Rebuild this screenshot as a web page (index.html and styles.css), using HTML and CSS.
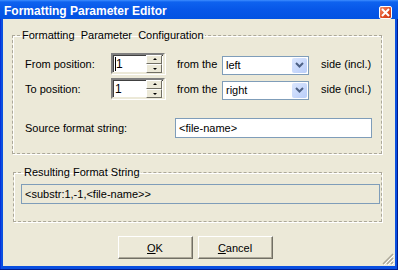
FILE: index.html
```html
<!DOCTYPE html>
<html lang="en">
  <head>
    <meta charset="UTF-8" />
    <title>Formatting Parameter Editor</title>
    <link rel="stylesheet" href="styles.css">
  </head>
  <body>
    <div class="window">
      <div class="titlebar">
        <span class="title">Formatting Parameter Editor</span>
        <span class="close">
          <svg width="9" height="9" viewBox="0 0 9 9">
            <path d="M1 1 L8 8 M8 1 L1 8" stroke="#fff" stroke-width="2" />
          </svg>
        </span>
      </div>

      <div class="client">
        <fieldset class="group config">
          <legend>Formatting&nbsp; Parameter&nbsp; Configuration</legend>

          <div class="row">
            <span class="label">From position:</span>
            <div class="spin">
              <span class="spin-text"><span class="caret"></span>1</span>
              <div class="spin-btns">
                <span class="spin-btn up"></span>
                <span class="spin-btn down"></span>
              </div>
            </div>
            <span class="from">from the</span>
            <div class="combo">
              <span class="combo-text">left</span>
              <span class="combo-btn">
                <svg width="9" height="6" viewBox="0 0 9 6">
                  <path d="M1 1 L4.5 4.5 L8 1" fill="none" stroke="#4d6185" stroke-width="2" />
                </svg>
              </span>
            </div>
            <span class="side">side (incl.)</span>
          </div>

          <div class="row">
            <span class="label">To position:</span>
            <div class="spin">
              <span class="spin-text">1</span>
              <div class="spin-btns">
                <span class="spin-btn up"></span>
                <span class="spin-btn down"></span>
              </div>
            </div>
            <span class="from">from the</span>
            <div class="combo">
              <span class="combo-text">right</span>
              <span class="combo-btn">
                <svg width="9" height="6" viewBox="0 0 9 6">
                  <path d="M1 1 L4.5 4.5 L8 1" fill="none" stroke="#4d6185" stroke-width="2" />
                </svg>
              </span>
            </div>
            <span class="side">side (incl.)</span>
          </div>

          <div class="row source">
            <span class="source-label">Source format string:</span>
            <div class="textbox">&lt;file-name&gt;</div>
          </div>
        </fieldset>

        <fieldset class="group result">
          <legend>Resulting Format String</legend>
          <div class="textbox readonly">&lt;substr:1,-1,&lt;file-name&gt;&gt;</div>
        </fieldset>

        <div class="buttons">
          <button class="button"><u>O</u>K</button>
          <button class="button"><u>C</u>ancel</button>
        </div>

        <svg class="grip" width="13" height="13" viewBox="0 0 13 13">
          <path d="M12 2 L2 12 M12 6 L6 12 M12 10 L10 12" stroke="#aca899" stroke-width="1.5" />
          <path d="M13 3 L3 13 M13 7 L7 13 M13 11 L11 13" stroke="#fff" stroke-width="1" />
        </svg>
      </div>
    </div>
  </body>
</html>
```

FILE: styles.css
```css
body {
  margin: 0;
  font-family: "Liberation Sans", Arial, sans-serif;
  font-size: 11px;
  color: #000;
}
.window {
  width: 398px;
  height: 270px;
  box-sizing: border-box;
  display: flex;
  flex-direction: column;
  background: #0a4fe0;
  padding: 0 3px 4px 3px;
  box-shadow: inset 0 -1px #001b8c, inset -1px 0 #001b8c, inset 1px 0 #0831d9;
}
.titlebar {
  height: 19px;
  margin: 0 -3px;
  padding: 0 6px 0 4px;
  display: flex;
  align-items: center;
  justify-content: space-between;
  background: linear-gradient(#3d8dff 0, #0e62ef 2px, #0757e8 50%, #0252e2 100%);
}
.title {
  color: #fff;
  font-weight: bold;
  font-size: 12px;
  padding-top: 2px;
}
.close {
  width: 11px;
  height: 11px;
  border: 1px solid #fff;
  border-radius: 2px;
  background: linear-gradient(135deg, #f28f6d, #e04a20 60%, #c8391a);
  display: flex;
  align-items: center;
  justify-content: center;
  margin-top: 6px;
}
.client {
  flex: 1;
  background: #ece9d8;
  position: relative;
  display: flex;
  flex-direction: column;
  padding: 0 13px 0 9px;
}
.group {
  margin: 0;
  border: 1px dashed #aca899;
  box-shadow: 1px 1px 0 #fff, inset 1px 1px 0 #fff;
  padding: 0;
}
.group legend {
  padding: 0 1px;
  white-space: pre;
}
.config {
  margin-top: 10px;
  height: 125px;
  box-sizing: border-box;
  padding: 12px 0 0 12px;
}
.config legend {
  margin-left: -4px;
}
.row {
  display: flex;
  align-items: center;
  height: 21px;
  margin-bottom: 4px;
}
.label {
  width: 86px;
}
.spin {
  width: 54px;
  height: 21px;
  box-sizing: border-box;
  border: 2px solid;
  border-color: #808080 #ece9d8 #ece9d8 #808080;
  box-shadow: inset 1px 1px 0 #404040, 1px 1px 0 #fff;
  background: #fff;
  display: flex;
  align-items: center;
}
.spin-text {
  flex: 1;
  padding-left: 2px;
  display: flex;
  align-items: center;
  font-size: 12px;
}
.caret {
  width: 1px;
  height: 14px;
  background: #000;
}
.spin-btns {
  display: flex;
  flex-direction: column;
  width: 16px;
  margin-right: 1px;
}
.spin-btn {
  height: 7px;
  background: #ece9d8;
  border: 1px solid;
  border-color: #fff #716f64 #716f64 #fff;
  position: relative;
}
.spin-btn::after {
  content: "";
  position: absolute;
  left: 6px;
  border-left: 2px solid transparent;
  border-right: 2px solid transparent;
}
.up::after {
  top: 2px;
  border-bottom: 2px solid #000;
}
.down::after {
  top: 3px;
  border-top: 2px solid #000;
}
.from {
  width: 45px;
  margin-left: 12px;
}
.combo {
  width: 87px;
  height: 19px;
  box-sizing: border-box;
  border: 1px solid #7f9db9;
  background: #fff;
  display: flex;
  align-items: center;
  margin-top: 3px;
}
.combo-text {
  flex: 1;
  padding-left: 3px;
}
.combo-btn {
  width: 15px;
  height: 15px;
  margin-right: 1px;
  border-radius: 2px;
  background: linear-gradient(135deg, #dae6fe, #b9cdf9);
  display: flex;
  align-items: center;
  justify-content: center;
}
.side {
  margin-left: 12px;
}
.source {
  margin-top: 19px;
  height: 20px;
}
.source-label {
  width: 150px;
}
.textbox {
  flex: 1;
  height: 20px;
  box-sizing: border-box;
  border: 1px solid #7f9db9;
  background: #fff;
  padding-left: 3px;
  display: flex;
  align-items: center;
  margin-right: 9px;
}
.readonly {
  background: #ece9d8;
  flex: none;
  margin: 0;
}
.result {
  margin-top: 12px;
  margin-left: 1px;
  height: 56px;
  box-sizing: border-box;
  padding: 6px 1px 0 7px;
}
.result legend {
  margin-left: 2px;
}
.buttons {
  display: flex;
  justify-content: center;
  gap: 5px;
  margin-top: 14px;
  margin-left: -4px;
}
.button {
  width: 75px;
  height: 23px;
  background: #ece9d8;
  font-family: inherit;
  font-size: 11px;
  border: 1px solid;
  border-color: #fff #716f64 #716f64 #fff;
  box-shadow: inset -1px -1px 0 #aca899;
  padding: 0;
}
.grip {
  position: absolute;
  right: 1px;
  bottom: 1px;
}
```
